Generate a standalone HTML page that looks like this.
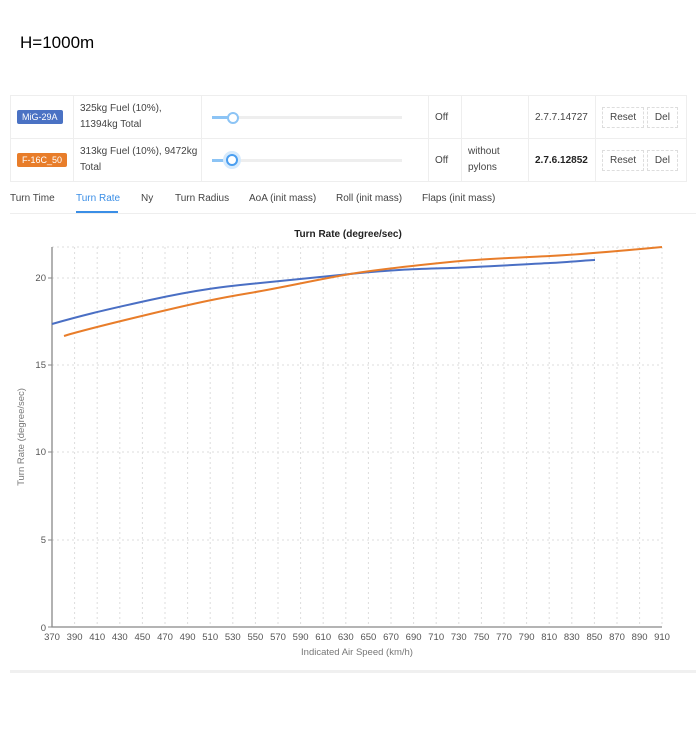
<!DOCTYPE html>
<html><head><meta charset="utf-8"><style>
body{margin:0;background:#fff;font-family:"Liberation Sans",sans-serif;color:#333;width:696px;height:750px;position:relative;overflow:hidden}
.a{position:absolute}
table{position:absolute;left:10px;top:95px;border-collapse:collapse;font-size:10px;table-layout:fixed;width:676px}
td{border:1px solid #eee;padding:0 6px;height:42px;color:#444;white-space:nowrap;overflow:hidden}
.tag{display:inline-block;color:#fff;font-size:9px;padding:2px 5px;border-radius:2px;white-space:nowrap}
.btn{display:inline-block;border:1px dashed #ddd;padding:4px 7px;font-size:10px}
.sl{position:relative;width:190px;height:10px;margin-left:4px}
.tabs span{position:absolute;top:193px;font-size:10px;color:#444}
</style></head><body>
<div class="a" style="left:20px;top:33px;font-size:17px;color:#000">H=1000m</div>
<table>
<colgroup><col style="width:63px"><col style="width:128px"><col style="width:227px"><col style="width:33px"><col style="width:67px"><col style="width:67px"><col style="width:91px"></colgroup>
<tr><td><span class="tag" style="background:#4a72c4">MiG-29A</span></td><td style="line-height:16px">325kg Fuel (10%),<br>11394kg Total</td>
<td><div class="sl"><div class="a" style="left:0;top:4px;width:190px;height:3px;background:#eee"></div><div class="a" style="left:0;top:4px;width:20px;height:3px;background:#8cc4f5"></div><div class="a" style="left:15px;top:0;width:8px;height:8px;border:2px solid #8cc4f5;border-radius:50%;background:#fff"></div></div></td>
<td>Off</td><td></td><td>2.7.7.14727</td><td><span class="btn">Reset</span> <span class="btn">Del</span></td></tr>
<tr><td><span class="tag" style="background:#e87d2a">F-16C_50</span></td><td style="line-height:16px">313kg Fuel (10%), 9472kg<br>Total</td>
<td><div class="sl"><div class="a" style="left:0;top:4px;width:190px;height:3px;background:#eee"></div><div class="a" style="left:0;top:4px;width:20px;height:3px;background:#8cc4f5"></div><div class="a" style="left:14px;top:-1px;width:8px;height:8px;border:2px solid #4a9ef0;border-radius:50%;background:#fff;box-shadow:0 0 0 3px #d6eafc"></div></div></td>
<td>Off</td><td style="line-height:16px">without<br>pylons</td><td><b style="color:#222">2.7.6.12852</b></td><td><span class="btn">Reset</span> <span class="btn">Del</span></td></tr>
</table>
<div class="tabs"><span style="left:10px">Turn Time</span><span style="left:76px;color:#3a8ee6">Turn Rate</span><span style="left:141px">Ny</span><span style="left:175px">Turn Radius</span><span style="left:249px">AoA (init mass)</span><span style="left:336px">Roll (init mass)</span><span style="left:422px">Flaps (init mass)</span></div>
<div class="a" style="left:76px;top:211px;width:42px;height:2px;background:#3a8ee6"></div>
<div class="a" style="left:10px;top:213px;width:686px;height:1px;background:#eee"></div>
<div class="a" style="left:10px;top:670px;width:686px;height:3px;background:#f0f0f0"></div>
<svg class="a" style="left:0;top:0" width="696" height="750" font-family="Liberation Sans, sans-serif">
<text x="348" y="237" font-size="10" font-weight="bold" text-anchor="middle" fill="#222">Turn Rate (degree/sec)</text>
<g stroke="#ddd" stroke-dasharray="2,3" stroke-width="1">
<line x1="52" y1="247" x2="662" y2="247"/><line x1="52" y1="278" x2="662" y2="278"/><line x1="52" y1="365" x2="662" y2="365"/><line x1="52" y1="452" x2="662" y2="452"/><line x1="52" y1="540" x2="662" y2="540"/>
<path d="M74.6 247V627M97.2 247V627M119.8 247V627M142.4 247V627M165 247V627M187.6 247V627M210.2 247V627M232.8 247V627M255.4 247V627M278 247V627M300.6 247V627M323.2 247V627M345.8 247V627M368.4 247V627M391 247V627M413.6 247V627M436.2 247V627M458.8 247V627M481.4 247V627M504 247V627M526.6 247V627M549.2 247V627M571.8 247V627M594.4 247V627M617 247V627M639.6 247V627M662 247V627"/>
</g>
<path d="M52 247V627H662" stroke="#888" stroke-width="1.3" fill="none"/>
<path d="M48 278H52M48 365H52M48 452H52M48 540H52M48 627H52" stroke="#888"/>
<g font-size="9.5" fill="#555" text-anchor="end"><text x="46" y="281">20</text><text x="46" y="368">15</text><text x="46" y="455">10</text><text x="46" y="543">5</text><text x="46" y="631">0</text></g>
<g font-size="9.5" fill="#555" text-anchor="middle"><text x="52" y="640">370</text><text x="74.6" y="640">390</text><text x="97.2" y="640">410</text><text x="119.8" y="640">430</text><text x="142.4" y="640">450</text><text x="165" y="640">470</text><text x="187.6" y="640">490</text><text x="210.2" y="640">510</text><text x="232.8" y="640">530</text><text x="255.4" y="640">550</text><text x="278" y="640">570</text><text x="300.6" y="640">590</text><text x="323.2" y="640">610</text><text x="345.8" y="640">630</text><text x="368.4" y="640">650</text><text x="391" y="640">670</text><text x="413.6" y="640">690</text><text x="436.2" y="640">710</text><text x="458.8" y="640">730</text><text x="481.4" y="640">750</text><text x="504" y="640">770</text><text x="526.6" y="640">790</text><text x="549.2" y="640">810</text><text x="571.8" y="640">830</text><text x="594.4" y="640">850</text><text x="617" y="640">870</text><text x="639.6" y="640">890</text><text x="662" y="640">910</text></g>
<text x="357" y="655" font-size="9.5" fill="#777" text-anchor="middle">Indicated Air Speed (km/h)</text>
<text transform="translate(24,437) rotate(-90)" font-size="9.5" fill="#777" text-anchor="middle">Turn Rate (degree/sec)</text>
<path d="M52 324C80 316 100 311 150 300S230 286 250 284S300 279 350 274S420 269 450 268S530 264 550 263S590 260 595 260" stroke="#4a6fc4" stroke-width="2" fill="none"/>
<path d="M64 336C80 331 100 326 150 314S220 298 250 293S320 279 350 274S420 265 450 262S530 257 550 256S620 251 662 247" stroke="#e87d2a" stroke-width="2" fill="none"/>
</svg>
</body></html>
